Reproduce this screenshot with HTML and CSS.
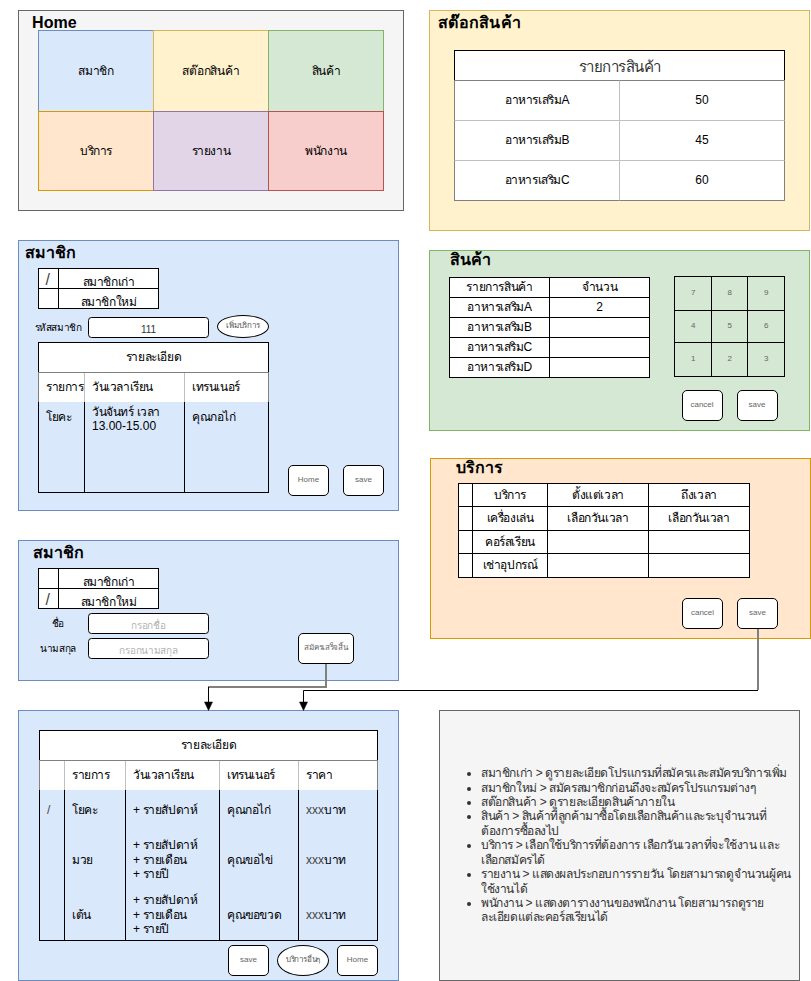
FILE: index.html
```html
<!DOCTYPE html>
<html lang="th">
<head>
<meta charset="utf-8">
<title>Fitness wireframe</title>
<link rel="stylesheet" href="styles.css">
</head>
<body>
<main class="canvas">

<section class="panel gray home">
  <h2>Home</h2>
  <div class="node tiles">
    <div class="blue">สมาชิก</div><div class="yellow">สต๊อกสินค้า</div><div class="green">สินค้า</div>
    <div class="orange">บริการ</div><div class="purple">รายงาน</div><div class="red">พนักงาน</div>
  </div>
</section>

<section class="panel yellow stock">
  <h2>สต๊อกสินค้า</h2>
  <div class="node stock-table">
    <div class="head">รายการสินค้า</div>
    <div>อาหารเสริมA</div><div class="num">50</div>
    <div>อาหารเสริมB</div><div class="num">45</div>
    <div>อาหารเสริมC</div><div class="num">60</div>
  </div>
</section>

<section class="panel blue member-old">
  <h2>สมาชิก</h2>
  <div class="node grid kind">
    <div class="mark">/</div><div>สมาชิกเก่า</div>
    <div class="mark"></div><div>สมาชิกใหม่</div>
  </div>
  <label class="node label code-label">รหัสสมาชิก</label>
  <div class="node field code num">111</div>
  <div class="node pill add">เพิ่มบริการ</div>
  <div class="node detail course">
    <div class="title">รายละเอียด</div>
    <div class="row head"><div>รายการ</div><div>วันเวลาเรียน</div><div>เทรนเนอร์</div></div>
    <div class="row body"><div>โยคะ</div><div class="two"><p>วันจันทร์ เวลา<br><span class="num">13.00-15.00</span></p></div><div>คุณกอไก่</div></div>
  </div>
  <div class="node button b-home">Home</div>
  <div class="node button b-save">save</div>
</section>

<section class="panel blue member-new">
  <h2>สมาชิก</h2>
  <div class="node grid kind">
    <div class="mark"></div><div>สมาชิกเก่า</div>
    <div class="mark">/</div><div>สมาชิกใหม่</div>
  </div>
  <label class="node label name-label">ชื่อ</label>
  <div class="node field hint first">กรอกชื่อ</div>
  <label class="node label surname-label">นามสกุล</label>
  <div class="node field hint last">กรอกนามสกุล</div>
  <div class="node button done">สมัครเสร็จสิ้น</div>
</section>

<section class="panel blue plans">
  <div class="node detail plan">
    <div class="title">รายละเอียด</div>
    <div class="row head"><div></div><div>รายการ</div><div>วันเวลาเรียน</div><div>เทรนเนอร์</div><div>ราคา</div></div>
    <div class="row body r1"><div class="slash">/</div><div>โยคะ</div><div>+ รายสัปดาห์</div><div>คุณกอไก่</div><div><span class="xxx">xxx</span>บาท</div></div>
    <div class="row body r2"><div></div><div>มวย</div><div>+ รายสัปดาห์<br>+ รายเดือน<br>+ รายปี</div><div>คุณขอไข่</div><div><span class="xxx">xxx</span>บาท</div></div>
    <div class="row body r3"><div></div><div>เต้น</div><div>+ รายสัปดาห์<br>+ รายเดือน<br>+ รายปี</div><div>คุณฃอขวด</div><div><span class="xxx">xxx</span>บาท</div></div>
  </div>
  <div class="node button b-save">save</div>
  <div class="node pill other">บริการอื่นๆ</div>
  <div class="node button b-home">Home</div>
</section>

<section class="panel green product">
  <h2>สินค้า</h2>
  <div class="node grid items">
    <div>รายการสินค้า</div><div>จำนวน</div>
    <div>อาหารเสริมA</div><div>2</div>
    <div>อาหารเสริมB</div><div></div>
    <div>อาหารเสริมC</div><div></div>
    <div>อาหารเสริมD</div><div></div>
  </div>
  <div class="node grid keypad">
    <div>7</div><div>8</div><div>9</div>
    <div>4</div><div>5</div><div>6</div>
    <div>1</div><div>2</div><div>3</div>
  </div>
  <div class="node button b-cancel">cancel</div>
  <div class="node button b-save">save</div>
</section>

<section class="panel orange service">
  <h2>บริการ</h2>
  <div class="node grid slots">
    <div></div><div>บริการ</div><div>ตั้งแต่เวลา</div><div>ถึงเวลา</div>
    <div></div><div>เครื่องเล่น</div><div>เลือกวันเวลา</div><div>เลือกวันเวลา</div>
    <div></div><div>คอร์สเรียน</div><div></div><div></div>
    <div></div><div>เช่าอุปกรณ์</div><div></div><div></div>
  </div>
  <div class="node button b-cancel">cancel</div>
  <div class="node button b-save">save</div>
</section>

<section class="panel gray notes">
  <ul>
    <li>สมาชิกเก่า &gt; ดูรายละเอียดโปรแกรมที่สมัครและสมัครบริการเพิ่ม</li>
    <li>สมาชิกใหม่ &gt; สมัครสมาชิกก่อนถึงจะสมัครโปรแกรมต่างๆ</li>
    <li>สต๊อกสินค้า &gt; ดูรายละเอียดสินค้าภายใน</li>
    <li>สินค้า &gt; สินค้าที่ลูกค้ามาซื้อโดยเลือกสินค้าและระบุจำนวนที่<br>ต้องการซื้อลงไป</li>
    <li>บริการ &gt; เลือกใช้บริการที่ต้องการ เลือกวันเวลาที่จะใช้งาน และ<br>เลือกสมัครได้</li>
    <li>รายงาน &gt; แสดงผลประกอบการรายวัน โดยสามารถดูจำนวนผู้คน<br>ใช้งานได้</li>
    <li>พนักงาน &gt; แสดงตารางงานของพนักงาน โดยสามารถดูราย<br>ละเอียดแต่ละคอร์สเรียนได้</li>
  </ul>
</section>

<svg class="links" width="811" height="981" viewBox="0 0 811 981">
  <path class="soft" d="M326 664V687H208"/>
  <path class="soft" d="M758 629V690"/>
  <path class="line" d="M208.500 687V704M758 690.500H303.500V704"/>
  <path class="tip" d="M208.500 710.500L204.500 702H212.500ZM303.500 710.500L299.500 702H307.500Z"/>
</svg>
</main>
</body>
</html>
```
FILE: styles.css
```css
* { box-sizing: border-box; }
body { margin: 0; background: #fff; }
p { margin: 0; }
.canvas {
  position: relative;
  width: 811px;
  height: 981px;
  overflow: hidden;
  font: 12px/14.4px "Liberation Sans", Tahoma, sans-serif;
  letter-spacing: -.4px;
  color: #000;
  white-space: nowrap;
}
.panel, .node, .panel h2, .links { position: absolute; }
.panel { border: 1px solid; }
.panel h2 { margin: 0; font-size: 16px; line-height: 20px; letter-spacing: .1px; color: #000; }
.num { letter-spacing: 0; }

.gray { background: #f5f5f5; border-color: #666; }
.blue { background: #dae8fc; border-color: #6c8ebf; }
.yellow { background: #fff2cc; border-color: #d6b656; }
.green { background: #d5e8d4; border-color: #82b366; }
.orange { background: #ffe6cc; border-color: #d79b00; }
.purple { background: #e1d5e7; border-color: #9673a6; }
.red { background: #f8cecc; border-color: #b85450; }

.home { left: 18px; top: 10px; width: 386px; height: 201px; }
.stock { left: 429px; top: 10px; width: 381px; height: 221px; }
.member-old { left: 18px; top: 240px; width: 381px; height: 271px; }
.product { left: 429px; top: 250px; width: 381px; height: 181px; }
.service { left: 430px; top: 458px; width: 381px; height: 181px; }
.member-new { left: 18px; top: 540px; width: 381px; height: 141px; }
.plans { left: 18px; top: 710px; width: 381px; height: 271px; }
.notes { left: 439px; top: 710px; width: 361px; height: 271px; }

.home h2 { left: 13px; top: 2px; }
.stock h2 { left: 8px; top: 2px; letter-spacing: .3px; }
.member-old h2 { left: 6px; top: 2px; }
.product h2 { left: 20px; top: -1px; }
.service h2 { left: 25px; top: -1px; }
.member-new h2 { left: 14px; top: 2px; }

/* home menu */
.tiles {
  left: 19px; top: 19px;
  display: grid;
  grid-template-columns: 115px 115px 115px;
  grid-template-rows: 81px 79px;
}
.tiles div {
  display: flex; align-items: center; justify-content: center;
  width: 116px; height: calc(100% + 1px);
  border: 1px solid;
}
.tiles .blue { border-color: #6c8ebf; }
.tiles .yellow { border-color: #d6b656; letter-spacing: -.2px; }
.tiles .green { border-color: #82b366; }
.tiles .orange { border-color: #d79b00; }
.tiles .purple { border-color: #9673a6; }
.tiles .red { border-color: #b85450; }

/* stock list */
.stock-table {
  left: 24px; top: 39px;
  width: 331px;
  display: grid;
  grid-template-columns: 165px 166px;
  grid-template-rows: 30px 40px 40px 41px;
  background: #fff;
}
.stock-table div {
  display: flex; align-items: center; justify-content: center;
  border-top: 1px solid #c0c0c0;
  border-left: 1px solid #808080;
}
.stock-table div:nth-child(odd) { border-left-color: #c0c0c0; border-right: 1px solid #808080; }
.stock-table div:nth-child(2), .stock-table div:nth-child(3) { border-top-color: #808080; }
.stock-table div:nth-child(n+6) { border-bottom: 1px solid #808080; }
.stock-table div.head {
  grid-column: 1 / 3;
  border: 1px solid #000; border-bottom: 0;
  font-size: 15px; letter-spacing: -.5px; color: #333; padding-top: 3px;
}

/* plain black grids */
.grid { display: grid; gap: 1px; padding: 1px; background: #000; }
.grid div { display: flex; align-items: center; justify-content: center; background: #fff; }
.kind { left: 19px; top: 27px; width: 121px; grid-template: 19px 19px / 19px 1fr; }
.kind div { padding-top: 8px; }
.kind .mark { font-size: 16px; color: #444; padding: 4px 2px 0 0; }
.items { left: 19px; top: 26px; width: 201px; grid-template: repeat(5, 19px) / 99px 99px; }
.keypad { left: 244px; top: 25px; width: 111px; grid-template: 33px 31px 33px / 36px 35px 36px; }
.keypad div { background: #d5e8d4; font-size: 8px; color: #666; }
.slots { left: 27px; top: 24px; width: 292px; grid-template: 22px 23px 22px 23px / 13px 74px 100px 100px; }

/* controls */
.label { font-size: 10px; line-height: 14px; width: 80px; text-align: center; }
.code-label { left: -1px; top: 80px; }
.name-label { left: -1px; top: 76px; }
.surname-label { left: -1px; top: 101px; }
.field, .button, .pill {
  display: flex; align-items: center; justify-content: center;
  border: 1px solid #000; background: #fff;
}
.field { left: 69px; width: 121px; height: 21px; border-radius: 3.500px; font-size: 10px; padding-top: 5px; color: #333; }
.code { top: 76px; }
.hint { color: #b3b3b3; letter-spacing: -.3px; }
.first { top: 72px; }
.last { top: 97px; }
.button { width: 41px; height: 31px; border-radius: 5px; font-size: 8px; letter-spacing: 0; color: #666; }
.pill { width: 52px; height: 23px; border-radius: 50%; font-size: 8px; letter-spacing: -.2px; color: #555; }
.add { left: 198px; top: 74px; }
.member-old .b-home { left: 269px; top: 224px; }
.member-old .b-save { left: 324px; top: 224px; }
.done { left: 279px; top: 92px; width: 56px; letter-spacing: -.3px; }
.plans .b-save { left: 209px; top: 234px; }
.plans .b-home { left: 318px; top: 234px; }
.other { left: 258px; top: 234px; height: 31px; }
.product .b-cancel { left: 251.500px; top: 139px; }
.product .b-save { left: 306.500px; top: 139px; }
.service .b-cancel { left: 251px; top: 139px; }
.service .b-save { left: 306px; top: 139px; }

/* detail tables */
.detail .title {
  display: flex; align-items: center; justify-content: center;
  height: 30px; background: #fff; border: 1px solid #000; border-bottom: 0;
}
.row { display: grid; }
.row > div { display: flex; align-items: center; border-left: 1px solid #000; padding-left: 7px; }
.row > div:last-child { border-right: 1px solid #000; }
.row.head { height: 30px; background: #fff; border-top: 1px solid #808080; }
.row.head > div { border-color: #c0c0c0; }
.row.head > div:first-child { border-left-color: #808080; }
.row.head > div:last-child { border-right-color: #808080; }
.row.body:last-child { border-bottom: 1px solid #000; }
.course { left: 19px; top: 101px; width: 231px; }
.course .row { grid-template-columns: 46px 100px 85px; }
.course .body { height: 91px; }
.course .body > div { align-items: flex-start; padding-top: 8px; }
.course .body > .two { padding-top: 3px; }
.plan { left: 20px; top: 19px; width: 339px; }
.plan .row { grid-template-columns: 25px 61px 94px 79px 80px; }
.r1 { height: 40px; }
.r2 { height: 60px; }
.r3 { height: 51px; }
.slash, .xxx { color: #444; letter-spacing: 0; }

/* notes */
.notes { display: flex; align-items: center; color: #333; letter-spacing: -.41px; }
.notes ul { margin: 0; padding-left: 41px; }

.links { left: 0; top: 0; fill: none; }
.soft { stroke: #808080; stroke-width: 2; }
.line { stroke: #000; }
.tip { fill: #000; stroke: #000; stroke-width: .5; }
```
